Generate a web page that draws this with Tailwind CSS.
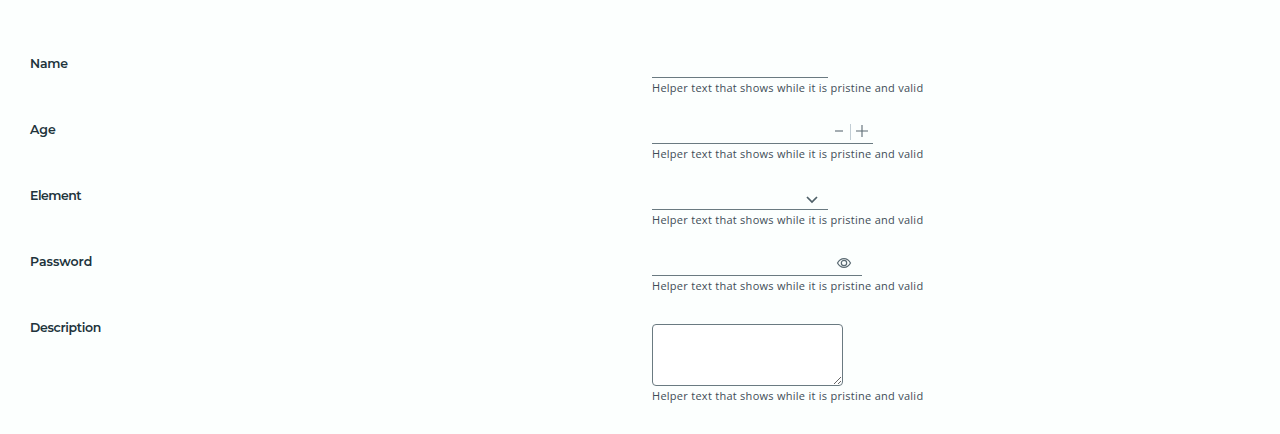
<!DOCTYPE html>
<html lang="en">
<head>
<meta charset="utf-8">
<title>Form</title>
<script src="https://cdn.jsdelivr.net/npm/@tailwindcss/browser@4"></script>
</head>
<body class="bg-[#fcfffe] overflow-hidden font-['Open_Sans','Noto_Sans',sans-serif] text-[#3f4d57]">
<form class="h-[434px] pl-[30px] pt-[54px] flex flex-col">
  <div class="grid grid-cols-[622px_1fr] h-[66px] shrink-0">
    <label for="name" class="font-[Metropolis,Montserrat,Inter,sans-serif] font-semibold text-[12.5px] leading-[20px] tracking-[-0.25px] text-[#21333b]">Name</label>
    <div class="flex flex-col items-start">
      <input id="name" type="text" class="block w-[176px] h-6 border-b border-[#6a7a81] outline-none">
      <span class="text-[11px] leading-[20px] tracking-[0.27px] whitespace-nowrap">Helper text that shows while it is pristine and valid</span>
    </div>
  </div>
  <div class="grid grid-cols-[622px_1fr] h-[66px] shrink-0">
    <label for="age" class="font-[Metropolis,Montserrat,Inter,sans-serif] font-semibold text-[12.5px] leading-[20px] text-[#21333b]">Age</label>
    <div class="flex flex-col items-start">
      <div class="flex w-[221px] h-6 border-b border-[#6a7a81]">
        <input id="age" type="text" class="w-[176px] outline-none">
        <button type="button" aria-label="Decrease" class="w-[22px] h-[23px] flex"><svg class="w-[22px] h-[23px]" viewBox="0 0 22 23" fill="none" stroke="#5b6b73" stroke-width="1.1"><path d="M7 11h8"/></svg></button>
        <span class="w-px h-4 mt-1 bg-[#c1cdd4]"></span>
        <button type="button" aria-label="Increase" class="w-[22px] h-[23px] flex"><svg class="w-[22px] h-[23px]" viewBox="0 0 22 23" fill="none" stroke="#5b6b73" stroke-width="1.1"><path d="M5 11h12M11 5v12"/></svg></button>
      </div>
      <span class="text-[11px] leading-[20px] tracking-[0.27px] whitespace-nowrap">Helper text that shows while it is pristine and valid</span>
    </div>
  </div>
  <div class="grid grid-cols-[622px_1fr] h-[66px] shrink-0">
    <label for="element" class="font-[Metropolis,Montserrat,Inter,sans-serif] font-semibold text-[12.5px] leading-[20px] tracking-[-0.5px] text-[#21333b]">Element</label>
    <div class="flex flex-col items-start">
      <div class="flex w-[176px] h-6 border-b border-[#6a7a81]">
        <input id="element" type="text" class="w-[152px] outline-none">
        <svg class="w-4 h-[23px]" viewBox="0 0 16 23" fill="none" stroke="#4f6068" stroke-width="1.7"><path d="M3 11l5 5 5-5"/></svg>
      </div>
      <span class="text-[11px] leading-[20px] tracking-[0.27px] whitespace-nowrap">Helper text that shows while it is pristine and valid</span>
    </div>
  </div>
  <div class="grid grid-cols-[622px_1fr] h-[66px] shrink-0">
    <label for="password" class="font-[Metropolis,Montserrat,Inter,sans-serif] font-semibold text-[12.5px] leading-[20px] text-[#21333b]">Password</label>
    <div class="flex flex-col items-start">
      <div class="flex w-[210px] h-6 border-b border-[#6a7a81]">
        <input id="password" type="password" class="w-[184px] outline-none">
        <svg class="w-4 h-[23px]" viewBox="0 0 16 23" fill="none" stroke="#5b6b73" stroke-width="1.2"><path d="M1.500 11C3 8.200 5.200 6.600 8 6.600s5 1.600 6.500 4.400C13 13.800 10.800 15.400 8 15.400S3 13.800 1.500 11z"/><circle cx="8" cy="11" r="2.700"/></svg>
      </div>
      <span class="text-[11px] leading-[20px] tracking-[0.27px] whitespace-nowrap">Helper text that shows while it is pristine and valid</span>
    </div>
  </div>
  <div class="grid grid-cols-[622px_1fr] shrink-0">
    <label for="description" class="font-[Metropolis,Montserrat,Inter,sans-serif] font-semibold text-[12.5px] leading-[20px] tracking-[-0.35px] text-[#21333b]">Description</label>
    <div class="flex flex-col items-start pt-[6px]">
      <textarea id="description" class="block w-[191px] h-[62px] rounded-[4px] border border-[#6a7a81] bg-white outline-none resize"></textarea>
      <span class="text-[11px] leading-[20px] tracking-[0.27px] whitespace-nowrap">Helper text that shows while it is pristine and valid</span>
    </div>
  </div>
</form>
</body>
</html>
